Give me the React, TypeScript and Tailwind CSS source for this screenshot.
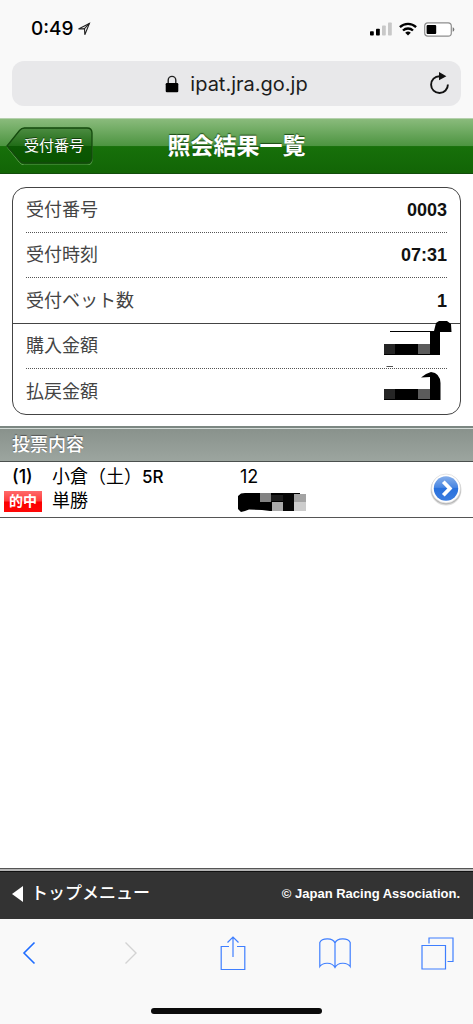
import type { ReactNode } from "react";

const sans = "font-['Liberation_Sans','Noto_Sans_CJK_JP',sans-serif]";
const system = "font-['Inter','Noto_Sans_CJK_JP',sans-serif]";

function StatusBar() {
  return (
    <div className="flex h-[61px] items-center justify-between pl-[31px] pr-[18px] pb-[3px]">
      <div className="flex items-center gap-1">
        <span className="text-[19px] leading-6 font-medium">0:49</span>
        <svg width="14" height="14" viewBox="0 0 14 14" fill="none" stroke="#222" strokeWidth="1.1">
          <path d="M1.500 7 12.400 1.400 7.800 12.800 7.500 6.600Z" />
          <path d="M7.500 6.600 12.400 1.400" />
        </svg>
      </div>
      <div className="flex items-center gap-[7px]">
        <svg width="22" height="14" viewBox="0 0 22 14">
          <rect x="0" y="9.3" width="3.8" height="4.3" rx="0.8" fill="#000" />
          <rect x="6" y="6.8" width="3.8" height="6.8" rx="0.8" fill="#000" />
          <rect x="12" y="3.5" width="3.8" height="10.1" rx="0.8" fill="#c8c8c8" />
          <rect x="18" y="0.5" width="3.8" height="13.1" rx="0.8" fill="#c8c8c8" />
        </svg>
        <svg width="18" height="14" viewBox="0 0 18 14" fill="none" stroke="#000" strokeWidth="2.3">
          <path d="M.9 5.2a11.7 11.7 0 0 1 16.2 0M4 8.5a7.2 7.2 0 0 1 10 0" />
          <path d="M9 13.6 6.2 10.8a4 4 0 0 1 5.6 0Z" fill="#000" stroke="none" />
        </svg>
        <svg width="31" height="15" viewBox="0 0 31 15">
          <rect x="0.7" y="0.9" width="26.6" height="13.2" rx="3.2" fill="#fff" stroke="#8d8d8d" strokeWidth="1.2" />
          <rect x="2.6" y="2.9" width="9.6" height="9.2" rx="1" fill="#000" />
          <path d="M28.7 5.2q1.6.5 1.6 2.3t-1.6 2.3z" fill="#777" />
        </svg>
      </div>
    </div>
  );
}

function AddressBar() {
  return (
    <div className="mx-3 mb-3 grid h-[45px] grid-cols-[1fr_auto_1fr] items-center rounded-xl bg-[#e8e8ea]">
      <span />
      <div className="flex items-center gap-[11px]">
        <svg width="14" height="18" viewBox="0 0 14 18">
          <path d="M3.2 9V5.2a3.8 3.8 0 0 1 7.6 0V9" fill="none" stroke="#222" strokeWidth="1.4" />
          <rect x="0.7" y="8" width="12.6" height="9.2" rx="1.2" fill="#000" />
        </svg>
        <span className="text-[20px] leading-6 text-[#1c1c1c]">ipat.jra.go.jp</span>
      </div>
      <button type="button" aria-label="再読み込み" className="mr-[11px] justify-self-end">
        <svg width="22" height="24" viewBox="0 0 22 24">
          <path d="M19.9 12.5A8.400 8.400 0 1 1 11.500 4.200" fill="none" stroke="#111" strokeWidth="1.9" />
          <path d="M11 0 18.400 4.300 11 8.300Z" fill="#111" />
        </svg>
      </button>
    </div>
  );
}

function PageHeader() {
  return (
    <header className="grid h-14 grid-cols-[1fr_auto_1fr] items-center border-t border-b border-t-[#b5d0ad] border-b-[#124d0c] bg-[linear-gradient(#8abb7c_0%,#4c9440_50%,#17700a_51%,#126506_100%)] text-white">
      <button type="button" className="relative ml-[6px] h-[38px] w-[87px] pl-[9px] text-[15px] leading-5 [text-shadow:0_-1px_0_#143d0d]">
        <svg className="absolute inset-0" width="87" height="38" viewBox="0 0 87 38">
          <defs>
            <linearGradient id="back" x1="0" y1="0" x2="0" y2="1">
              <stop offset="0" stopColor="#4d8c42" />
              <stop offset="0.5" stopColor="#226d18" />
              <stop offset="0.52" stopColor="#0c5804" />
              <stop offset="1" stopColor="#095400" />
            </linearGradient>
          </defs>
          <path d="M1 20 13.5 3.5Q15.5 1 18.5 1H81q5 0 5 5v27q0 5-5 5H18.500q-3 0-5-2.500Z" fill="none" stroke="#5d9e50" strokeWidth="1" />
          <path d="M1 19 13.500 3.500Q15.500 1 18.500 1H81q5 0 5 5v25q0 5-5 5H18.500q-3 0-5-2.500Z" fill="url(#back)" stroke="#154a0e" strokeWidth="1.300" />
        </svg>
        <span className="relative">受付番号</span>
      </button>
      <h1 className="text-[23px] leading-8 font-bold [text-shadow:0_-1px_1px_#1c4a14]">照会結果一覧</h1>
    </header>
  );
}

function PurchaseMask() {
  return (
    <svg className="absolute top-[-4px] right-[-5px]" width="68" height="50" viewBox="384 320 68 50" role="img" aria-label="非表示">
      <path d="M390 331.500H435" stroke="#000" strokeWidth="1.200" />
      <path d="M384 344H430V332L434 331 436 323 439 321H447L451 324 451.500 332H440V355H384Z" />
      <path d="M384 344h11v10h-11z" fill="#252525" />
      <path d="M418 344h12v10h-12z" fill="#5b5b5b" />
      <path d="M386.500 366.500H393" stroke="#555" />
    </svg>
  );
}

function PayoutMask() {
  return (
    <svg className="absolute top-[-1px] right-[-5px]" width="68" height="36" viewBox="384 368 68 36" role="img" aria-label="非表示">
      <path d="M384 389H430V377L421 377.500Q426 373 431 372 440 373 440.500 383V400H384Z" />
      <path d="M384 389h11v10h-11z" fill="#252525" />
      <path d="M418 389h12v10h-12z" fill="#5b5b5b" />
    </svg>
  );
}

function Row({ label, children, last }: { label: string; children: ReactNode; last?: boolean }) {
  return (
    <div
      className={
        last
          ? "relative mx-[13px] flex h-[45px] items-center justify-between"
          : "relative mx-[13px] flex h-[45px] items-center justify-between border-b border-dotted border-[#555]"
      }
    >
      <dt className="text-[#444]">{label}</dt>
      <dd className="font-bold text-[#111]">{children}</dd>
    </div>
  );
}

function Summary() {
  return (
    <div className="mx-3 mt-[13px] mb-[11px] rounded-[14px] border border-[#444] text-[18px] leading-6">
      <dl className="border-b border-[#444]">
        <Row label="受付番号">0003</Row>
        <Row label="受付時刻">07:31</Row>
        <Row label="受付ベット数" last>1</Row>
      </dl>
      <dl>
        <Row label="購入金額"><PurchaseMask /></Row>
        <Row label="払戻金額" last><PayoutMask /></Row>
      </dl>
    </div>
  );
}

function Bets() {
  return (
    <section>
      <h2 className="flex h-9 items-center border-t-2 border-b border-t-[#7c8782] border-b-[#4b504e] bg-[linear-gradient(#d3dbd7_0px,#d3dbd7_1px,#89928c_1px,#9ca59f_100%)] px-3 text-[18px] leading-6 font-medium text-white [text-shadow:0_-1px_1px_#555]">
        投票内容
      </h2>
      <div className={`grid grid-cols-[48px_188px_1fr_auto] items-center border-b border-[#555] pt-[3px] pr-[10px] pb-1 pl-1 text-[18px] leading-6 ${system}`}>
        <div>
          <div className="pl-2 font-medium">(1)</div>
          <div className="flex h-6 items-center">
            <span className="flex h-[21px] w-[38px] items-center justify-center bg-[linear-gradient(#ff6a6a_0%,#ff3a3a_48%,#fa0000_52%,#ff0808_100%)] text-[14px] leading-5 font-bold text-white">的中</span>
          </div>
        </div>
        <div>
          <div>小倉（土）<span className="text-[17px] font-medium">5R</span></div>
          <div>単勝</div>
        </div>
        <div>
          <div>12</div>
          <svg className="-ml-[2px]" width="68" height="24" viewBox="238 489 68 24" role="img" aria-label="非表示">
            <path d="M238 496 241 493.500 245 493H300V511H270L262 510 249 509.500 245 511 241 512 238 509Z" />
            <path d="M260 493h11v9h-11z" fill="#828282" />
            <path d="M271 495h12v6h-12z" fill="#1c1c1c" />
            <path d="M272 502h11v9h-11z" fill="#aaa" />
            <path d="M283 493h11v18h-11z" fill="#050505" />
            <path d="M294 494h12v8h-12z" fill="#a3a3a3" />
            <path d="M294 502h12v9h-12z" fill="#ccc" />
          </svg>
        </div>
        <button type="button" aria-label="詳細">
          <svg width="34" height="34" viewBox="0 0 34 34">
            <defs>
              <linearGradient id="detail" x1="0" y1="0" x2="0" y2="1">
                <stop offset="0" stopColor="#85aeea" />
                <stop offset="0.45" stopColor="#4a87e2" />
                <stop offset="0.5" stopColor="#2870dc" />
                <stop offset="1" stopColor="#3b7de0" />
              </linearGradient>
            </defs>
            <circle cx="17" cy="18" r="15.500" fill="#ddd" />
            <circle cx="17" cy="17.500" r="15" fill="#b7b7b7" />
            <circle cx="17" cy="16.500" r="14.500" fill="#fff" stroke="#d5d5d5" strokeWidth="0.600" />
            <circle cx="17" cy="16.500" r="12.200" fill="url(#detail)" />
            <path d="M14.300 9.800 20.800 16.500 14.300 23.200" fill="none" stroke="#fff" strokeWidth="3.800" />
          </svg>
        </button>
      </div>
    </section>
  );
}

function PageFooter() {
  return (
    <footer className="flex h-[51px] items-center justify-between border-t border-[#555] bg-[linear-gradient(#b5b5b5_0px,#b5b5b5_2px,#111_2px,#111_3px,#333_3px)] pr-[13px] pl-3 text-white">
      <a href="#top" className="flex items-center gap-2 text-[17px] leading-6 font-medium">
        <svg width="11" height="16" viewBox="0 0 11 16"><path d="M11 0V16L0 8Z" fill="#fff" /></svg>
        トップメニュー
      </a>
      <small className="text-[13px] leading-5 font-bold">© Japan Racing Association.</small>
    </footer>
  );
}

function Tool({ label, children, disabled }: { label: string; children: ReactNode; disabled?: boolean }) {
  return (
    <button type="button" aria-label={label} disabled={disabled} className="flex h-10 w-[46px] items-center justify-center">
      {children}
    </button>
  );
}

function Toolbar() {
  return (
    <nav className="bg-[#f9f9f9] pt-[14px] pb-[10px]">
      <div className="flex justify-between pr-[13px] pl-[6px]">
        <Tool label="戻る">
          <svg width="14" height="24" viewBox="0 0 14 24" fill="none" stroke="#1f6dff" strokeWidth="1.600"><path d="M12.500 1.500 2 12 12.500 22.500" /></svg>
        </Tool>
        <Tool label="進む" disabled>
          <svg width="14" height="24" viewBox="0 0 14 24" fill="none" stroke="#d3d3d3" strokeWidth="1.400"><path d="M1.500 1.500 12 12 1.500 22.500" /></svg>
        </Tool>
        <Tool label="共有">
          <svg width="26" height="36" viewBox="0 0 26 36" fill="none" stroke="#3f7fff" strokeWidth="1.200">
            <path d="M9 11.500H1.200V34.500H24.800V11.500H17M13 22V2M7.500 7.500 13 2 18.500 7.500" />
          </svg>
        </Tool>
        <Tool label="ブックマーク">
          <svg width="32" height="32" viewBox="0 0 32 32" fill="none" stroke="#3f7fff" strokeWidth="1.200">
            <path d="M16 6C14 .5 3 .5 .8 5.500V29.500C4 25 13 25 16 30.500 19 25 28 25 31.200 29.500V5.500C29 .5 18 .5 16 6ZM16 6V30.500" />
          </svg>
        </Tool>
        <Tool label="タブ">
          <svg width="33" height="33" viewBox="0 0 33 33" fill="none" stroke="#3f7fff" strokeWidth="1.200">
            <path d="M1 8.500H24.500V32H1ZM8 6.500V1H32V24.500H26.500" />
          </svg>
        </Tool>
      </div>
      <div className="mx-auto mt-[35px] h-[6px] w-[36%] rounded-full bg-[#0b0b0b]" />
    </nav>
  );
}

export default function App() {
  return (
    <div className={`flex min-h-screen flex-col bg-white text-black ${sans}`}>
      <div className={`bg-[#f9f9f9] ${system}`}>
        <StatusBar />
        <AddressBar />
      </div>
      <PageHeader />
      <main className="flex-1">
        <Summary />
        <Bets />
      </main>
      <PageFooter />
      <Toolbar />
    </div>
  );
}
